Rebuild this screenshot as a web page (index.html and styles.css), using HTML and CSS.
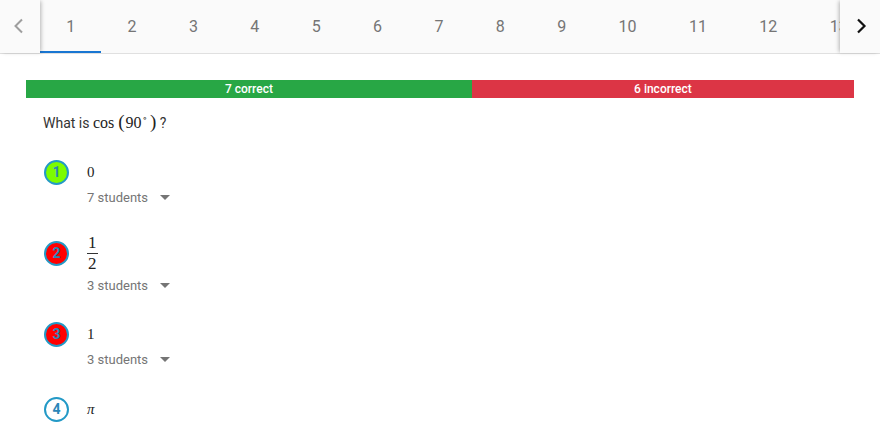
FILE: index.html
```html
<!DOCTYPE html>
<html>
<head>
<meta charset="utf-8">
<link rel="stylesheet" href="styles.css">
</head>
<body>
<div class="tabbar">
  <div class="scroll-btn left">
    <svg width="12" height="16" viewBox="0 0 12 16"><polyline points="9,1.5 2.5,8 9,14.5" fill="none" stroke="#9e9e9e" stroke-width="2"/></svg>
  </div>
  <div class="tabs">
    <div class="tab active">1</div>
    <div class="tab">2</div>
    <div class="tab">3</div>
    <div class="tab">4</div>
    <div class="tab">5</div>
    <div class="tab">6</div>
    <div class="tab">7</div>
    <div class="tab">8</div>
    <div class="tab">9</div>
    <div class="tab">10</div>
    <div class="tab">11</div>
    <div class="tab">12</div>
    <div class="tab">13</div>
  </div>
  <div class="scroll-btn right">
    <svg width="12" height="16" viewBox="0 0 12 16"><polyline points="3,1.5 9.5,8 3,14.5" fill="none" stroke="#111" stroke-width="2.2"/></svg>
  </div>
</div>

<div class="content">
  <div class="progress">
    <div class="seg correct" style="width: 53.85%">7 correct</div>
    <div class="seg incorrect" style="width: 46.15%">6 incorrect</div>
  </div>

  <div class="question">What is <span class="math">cos</span><span class="math paren">(</span><span class="math">90<sup class="deg">∘</sup></span><span class="math paren close">)</span> ?</div>

  <div class="options">
    <div class="option">
      <div class="answer-row">
        <div class="badge green">1</div>
        <div class="answer math">0</div>
      </div>
      <div class="students">7 students <span class="caret"></span></div>
    </div>
    <div class="option">
      <div class="answer-row tall">
        <div class="badge red">2</div>
        <div class="answer math">
          <span class="frac"><span class="num">1</span><span class="den">2</span></span>
        </div>
      </div>
      <div class="students">3 students <span class="caret"></span></div>
    </div>
    <div class="option">
      <div class="answer-row">
        <div class="badge red">3</div>
        <div class="answer math">1</div>
      </div>
      <div class="students">3 students <span class="caret"></span></div>
    </div>
    <div class="option">
      <div class="answer-row">
        <div class="badge">4</div>
        <div class="answer math italic">π</div>
      </div>
    </div>
  </div>
</div>
</body>
</html>
```

FILE: styles.css
```css
* { box-sizing: border-box; }
html, body { margin: 0; padding: 0; background: #fff; }
body {
  font-family: Roboto, "Liberation Sans", Arial, sans-serif;
  width: 880px;
  height: 440px;
  overflow: hidden;
  color: #333;
}

.tabbar {
  display: flex;
  height: 54px;
  background: #fafafa;
  border-bottom: 1px solid #e0e0e0;
}
.scroll-btn {
  width: 40px;
  flex: 0 0 40px;
  display: flex;
  align-items: center;
  justify-content: center;
  background: #fafafa;
  position: relative;
  z-index: 2;
  padding-bottom: 1px;
}
.scroll-btn.left { box-shadow: 2px 0 4px -1px rgba(0,0,0,0.28); padding-right: 2px; }
.scroll-btn.right { box-shadow: -2px 0 4px -1px rgba(0,0,0,0.28); padding-left: 2px; }

.tabs {
  flex: 1;
  display: flex;
  overflow: hidden;
}
.tab {
  flex: 0 0 auto;
  padding: 0 26.2px;
  font-size: 16px;
  color: #757575;
  display: flex;
  align-items: center;
  height: 53px;
  border-bottom: 2px solid transparent;
  padding-top: 2px;
}
.tab.active { border-bottom-color: #1976d2; }

.content { padding: 26px 26px 0 26px; }

.progress {
  display: flex;
  height: 18px;
}
.seg {
  color: #fff;
  font-size: 12px;
  font-weight: 500;
  display: flex;
  align-items: center;
  justify-content: center;
  line-height: 18px;
}
.seg.correct { background: #28a745; }
.seg.incorrect { background: #dc3545; }

.question {
  margin: 12px 0 0 17px;
  font-size: 14px;
  line-height: 24px;
  height: 24px;
  color: #333;
}
.question .math { font-family: "Liberation Serif", "DejaVu Serif", serif; font-size: 16px; color: #222; }
.question .paren { font-size: 19px; margin-left: 4px; margin-right: 1px; }
.question .paren.close { margin-left: 3px; margin-right: 0; }
.deg { font-size: 9px; vertical-align: 7px; margin-left: 1px; line-height: 0; }

.options {
  margin: 26px 0 0 18px;
  display: flex;
  flex-direction: column;
  gap: 28px;
}
.option { display: flex; flex-direction: column; }
.option + .option + .option + .option { margin-top: 1px; }
.answer-row {
  display: flex;
  align-items: center;
  height: 24px;
}
.answer-row.tall { height: 38px; }
.badge {
  width: 25px;
  height: 25px;
  border-radius: 50%;
  border: 2px solid #2399c6;
  color: #2a86b8;
  font-weight: 700;
  font-size: 14px;
  display: flex;
  align-items: center;
  justify-content: center;
  background: #fff;
  flex: 0 0 25px;
}
.badge.green { background: #7cfc00; }
.badge.red { background: #ff0000; }
.answer {
  margin-left: 18px;
  font-size: 15px;
  color: #222;
}
.math { font-family: "Liberation Serif", "DejaVu Serif", serif; }
.italic { font-style: italic; }
.frac {
  display: inline-flex;
  flex-direction: column;
  align-items: center;
  font-size: 17px;
  line-height: 18px;
}
.frac .num { border-bottom: 1px solid #333; padding: 0 1px 1px; }
.frac .den { padding-top: 1px; }

.students {
  margin: 4px 0 0 43px;
  height: 18px;
  font-size: 13px;
  color: #757575;
  display: flex;
  align-items: center;
}
.caret {
  display: inline-block;
  width: 0;
  height: 0;
  border-left: 5px solid transparent;
  border-right: 5px solid transparent;
  border-top: 5px solid #757575;
  margin-left: 12px;
  margin-top: 1px;
}
```
